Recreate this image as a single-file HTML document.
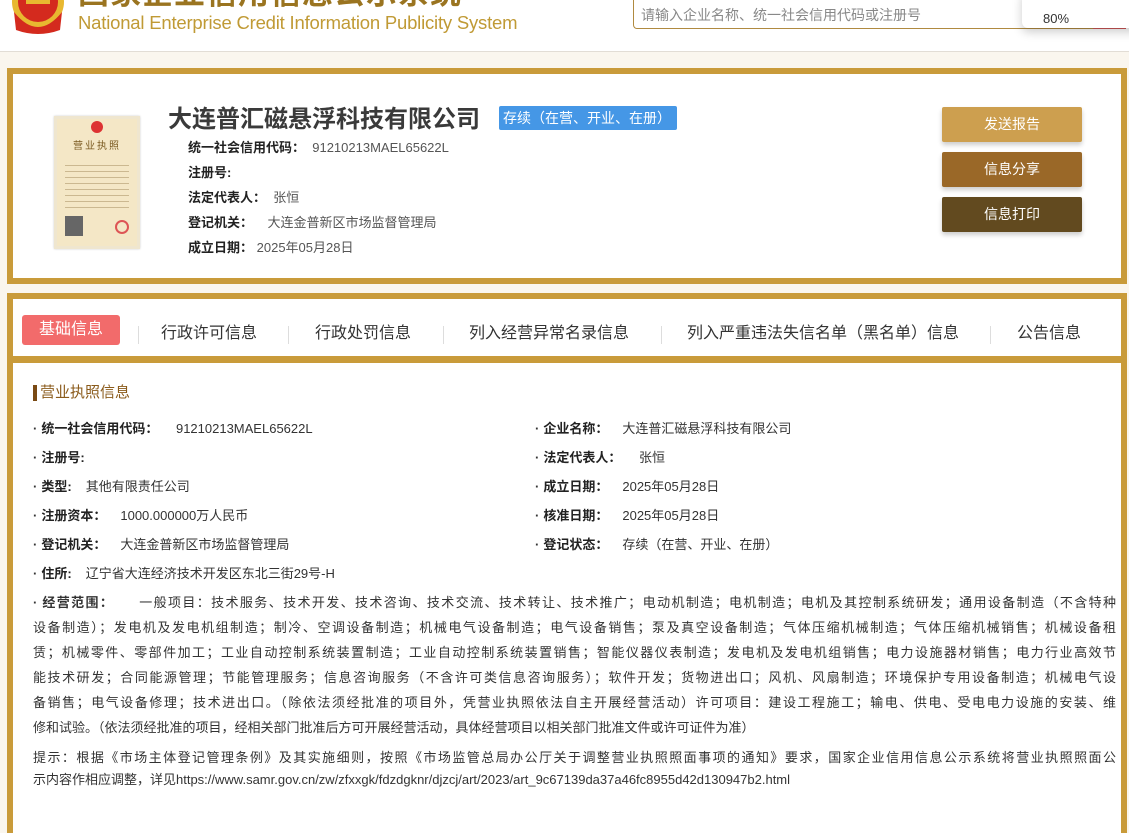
<!DOCTYPE html>
<html><head><meta charset="utf-8">
<style>
*{margin:0;padding:0;box-sizing:border-box}
body{width:1129px;height:821px;overflow:hidden;background:#faf6ee;font-family:"Liberation Sans","Noto Sans CJK SC",sans-serif;color:#333;position:relative}
.hdr{position:absolute;left:0;top:0;width:1129px;height:52px;background:#fff;border-bottom:1px solid #e2ddd5}
.emb{position:absolute;left:10px;top:-18px;width:56px;height:52px}
.cn{position:absolute;left:78px;top:-32px;font-size:31px;font-weight:bold;color:#9a7420;white-space:nowrap;letter-spacing:1px}
.en{position:absolute;left:78px;top:12px;font-size:18.5px;color:#c09a35;white-space:nowrap;letter-spacing:-0.2px}
.search{position:absolute;left:633px;top:-5px;width:492px;height:34px;border:1px solid #b08a40;border-radius:0 0 4px 4px;font-size:14px;color:#888;padding:9px 0 0 7px;background:#fff}
.redb{position:absolute;left:1093px;top:24px;width:33px;height:5px;background:#c55}
.pop{position:absolute;left:1022px;top:-10px;width:120px;height:38px;background:#fff;border-radius:6px;box-shadow:0 4px 10px rgba(0,0,0,.2);font-size:13px;color:#333;padding:2px 0 0 21px;line-height:18px}
.card1{position:absolute;left:7px;top:68px;width:1120px;height:216px;border:6px solid #c99b3a;background:#fff}
.card2{position:absolute;left:7px;top:293px;width:1120px;height:540px;border:6px solid #c99b3a;border-bottom:none;background:#fff}
.band{position:absolute;left:0;top:57px;width:1108px;height:7px;background:#c99b3a}
.lic{position:absolute;left:41px;top:42px;width:86px;height:133px;background:#f4e7c6;border:3px solid #efe6cf;box-shadow:0 0 2px #ccc}
.title{position:absolute;left:155px;top:25px;font-size:24px;font-weight:bold;color:#3a3a3a;white-space:nowrap}
.badge{position:absolute;left:486px;top:32px;width:178px;height:24px;background:#4597e6;color:#fff;font-size:14px;line-height:24px;padding-left:4px;border-radius:2px}
.ir{position:absolute;left:175px;font-size:13px;white-space:nowrap;color:#555}
.ir b{color:#222}
.btn{position:absolute;left:929px;width:140px;height:35px;color:#fff;font-size:14px;text-align:center;line-height:35px;border-radius:2px;box-shadow:0 3px 5px rgba(0,0,0,.2)}
.tabs{position:absolute;top:0;left:0;height:57px;width:1108px}
.tab{position:absolute;top:20px;font-size:16px;color:#333;white-space:nowrap}
.sep{position:absolute;top:27px;width:1px;height:18px;background:#ddd}
.act{position:absolute;left:9px;top:16px;width:98px;height:30px;background:#f26b6b;border-radius:3px;color:#fff;font-size:16px;text-align:center;line-height:30px}
.sec{position:absolute;left:20px;top:86px;font-size:15px;color:#8a5a1a;border-left:4px solid #7a4a14;padding-left:3px;line-height:16px}
.r{position:absolute;font-size:13px;white-space:nowrap;color:#333}
.r b{color:#222;margin-right:14px}
.r:before{content:"·";font-weight:bold;margin-right:4px}
.sc{position:absolute;left:20px;width:1083px;font-size:13px;color:#333}
.sc div{height:25px;line-height:18px;white-space:nowrap;text-align:justify;text-align-last:justify}
.sc div.l{text-align-last:left}
.hint{position:absolute;left:20px;top:448px;width:1083px;font-size:13px;color:#333}
.hint div{height:22px;white-space:nowrap;text-align:justify;text-align-last:justify}
</style></head><body>
<div class="hdr">
 <svg class="emb" viewBox="0 0 56 52"><circle cx="28" cy="20" r="26" fill="#e8b830"/><circle cx="28" cy="20" r="20" fill="#d42a1e"/><rect x="16" y="14" width="24" height="8" fill="#e8b830"/><path d="M4 30 Q28 60 52 30 L50 48 Q28 56 6 48Z" fill="#d42a1e"/><path d="M10 34 Q28 50 46 34" stroke="#e8b830" stroke-width="3" fill="none"/></svg>
 <div class="cn">国家企业信用信息公示系统</div>
 <div class="en">National Enterprise Credit Information Publicity System</div>
 <div class="search">请输入企业名称、统一社会信用代码或注册号</div>
 <div class="redb"></div>
 <div class="pop"><br>80%</div>
</div>
<div class="card1">
 <div class="lic">
  <div style="width:12px;height:12px;border-radius:50%;background:#d33;margin:2px auto 0"></div>
  <div style="font-size:10px;color:#7a5a20;text-align:center;margin-top:4px;letter-spacing:2px">营业执照</div>
  <div style="margin:10px 8px 0;height:48px;background:repeating-linear-gradient(#f4e7c6 0 3px,#cbb890 3px 4px,#f4e7c6 4px 6px)"></div>
  <div style="margin:6px 0 0 8px;width:18px;height:20px;background:#666"></div>
  <div style="position:absolute;right:8px;bottom:12px;width:14px;height:14px;border-radius:50%;border:2px solid #d55"></div>
 </div>
 <div class="title">大连普汇磁悬浮科技有限公司</div>
 <div class="badge">存续（在营、开业、在册）</div>
 <div class="ir" style="top:63px"><b>统一社会信用代码：</b>&nbsp;&nbsp;91210213MAEL65622L</div>
 <div class="ir" style="top:88px"><b>注册号:</b></div>
 <div class="ir" style="top:113px"><b>法定代表人：</b>&nbsp; 张恒</div>
 <div class="ir" style="top:138px"><b>登记机关：</b>&nbsp;&nbsp;&nbsp; 大连金普新区市场监督管理局</div>
 <div class="ir" style="top:163px"><b>成立日期：</b> 2025年05月28日</div>
 <div class="btn" style="top:33px;background:#cd9f4f">发送报告</div>
 <div class="btn" style="top:78px;background:#9a6828">信息分享</div>
 <div class="btn" style="top:123px;background:#624a1f">信息打印</div>
</div>
<div class="card2">
 <div class="tabs">
  <div class="act">基础信息</div>
  <div class="sep" style="left:125px"></div>
  <div class="tab" style="left:148px">行政许可信息</div>
  <div class="sep" style="left:275px"></div>
  <div class="tab" style="left:302px">行政处罚信息</div>
  <div class="sep" style="left:430px"></div>
  <div class="tab" style="left:456px">列入经营异常名录信息</div>
  <div class="sep" style="left:648px"></div>
  <div class="tab" style="left:674px">列入严重违法失信名单（黑名单）信息</div>
  <div class="sep" style="left:977px"></div>
  <div class="tab" style="left:1004px">公告信息</div>
 </div>
 <div class="band"></div>
 <div class="sec">营业执照信息</div>
 <div class="r" style="left:20px;top:119px"><b>统一社会信用代码：</b> 91210213MAEL65622L</div>
 <div class="r" style="left:522px;top:119px"><b>企业名称：</b>大连普汇磁悬浮科技有限公司</div>
 <div class="r" style="left:20px;top:148px"><b>注册号:</b></div>
 <div class="r" style="left:522px;top:148px"><b>法定代表人：</b> 张恒</div>
 <div class="r" style="left:20px;top:177px"><b>类型:</b>其他有限责任公司</div>
 <div class="r" style="left:522px;top:177px"><b>成立日期：</b>2025年05月28日</div>
 <div class="r" style="left:20px;top:206px"><b>注册资本：</b>1000.000000万人民币</div>
 <div class="r" style="left:522px;top:206px"><b>核准日期：</b>2025年05月28日</div>
 <div class="r" style="left:20px;top:235px"><b>登记机关：</b>大连金普新区市场监督管理局</div>
 <div class="r" style="left:522px;top:235px"><b>登记状态：</b>存续（在营、开业、在册）</div>
 <div class="r" style="left:20px;top:264px"><b>住所:</b>辽宁省大连经济技术开发区东北三街29号-H</div>
 <div class="sc" style="top:295px">
  <div><b>· 经营范围：</b>&nbsp;&nbsp;&nbsp;&nbsp; 一般项目：技术服务、技术开发、技术咨询、技术交流、技术转让、技术推广；电动机制造；电机制造；电机及其控制系统研发；通用设备制造（不含特种</div>
  <div>设备制造）；发电机及发电机组制造；制冷、空调设备制造；机械电气设备制造；电气设备销售；泵及真空设备制造；气体压缩机械制造；气体压缩机械销售；机械设备租</div>
  <div>赁；机械零件、零部件加工；工业自动控制系统装置制造；工业自动控制系统装置销售；智能仪器仪表制造；发电机及发电机组销售；电力设施器材销售；电力行业高效节</div>
  <div>能技术研发；合同能源管理；节能管理服务；信息咨询服务（不含许可类信息咨询服务）；软件开发；货物进出口；风机、风扇制造；环境保护专用设备制造；机械电气设</div>
  <div>备销售；电气设备修理；技术进出口。（除依法须经批准的项目外，凭营业执照依法自主开展经营活动）许可项目：建设工程施工；输电、供电、受电电力设施的安装、维</div>
  <div class="l">修和试验。（依法须经批准的项目，经相关部门批准后方可开展经营活动，具体经营项目以相关部门批准文件或许可证件为准）</div>
 </div>
 <div class="hint">
  <div>提示：根据《市场主体登记管理条例》及其实施细则，按照《市场监管总局办公厅关于调整营业执照照面事项的通知》要求，国家企业信用信息公示系统将营业执照照面公</div>
  <div style="text-align-last:left">示内容作相应调整，详见https://www.samr.gov.cn/zw/zfxxgk/fdzdgknr/djzcj/art/2023/art_9c67139da37a46fc8955d42d130947b2.html</div>
 </div>
</div>
</body></html>
